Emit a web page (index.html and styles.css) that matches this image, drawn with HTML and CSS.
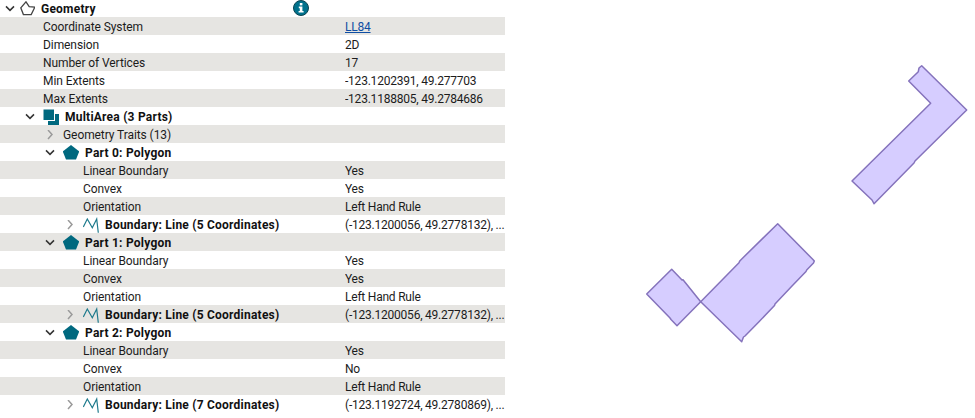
FILE: index.html
```html
<!DOCTYPE html>
<html lang="en">
<head>
  <meta charset="UTF-8">
  <title>Geometry</title>
  <link rel="stylesheet" href="styles.css">
</head>
<body>

  <!-- shared icons -->
  <svg class="defs" aria-hidden="true">
    <symbol id="open" viewBox="0 0 16 10"><path d="M4 2.4l4 4 4-4" fill="none" stroke="#333" stroke-width="1.5"/></symbol>
    <symbol id="closed" viewBox="0 0 16 10"><path d="M6 0l4 4.5-4 4.5" fill="none" stroke="#9a9a9a" stroke-width="1.5"/></symbol>
    <symbol id="poly" viewBox="0 0 16 16"><path d="M8 0l8.2 6.5-3.2 8H3L-.2 6.5z" fill="#00697f"/></symbol>
    <symbol id="line" viewBox="0 0 16 16"><path d="M.3 10L4.3 2 9.3 10.7 13.7 2 15.3 15.7" fill="none" stroke="#1d7a8c" stroke-width="1.2"/></symbol>
  </svg>

  <div class="page">
    <div class="tree">
      <div class="row first bold">
        <div class="name lvl0">
          <svg class="chev"><use href="#open"/></svg>
          <svg class="icon-geom" viewBox="0 0 15 15"><path d="M6 .8L9.2 5.6 14.8 6.2 11.2 13.6H3.4L.8 6.8z" fill="#fff" stroke="#444" stroke-width="1.3"/></svg>
          <span>Geometry</span>
        </div>
        <div class="value">
          <svg class="info" viewBox="0 0 16 16">
            <circle cx="8" cy="8" r="7.5" fill="#00718c" stroke="#0b4350"/>
            <rect x="6.8" y="3" width="2.6" height="2.4" fill="#fff"/>
            <path d="M5.8 6.6h3.6v4.4h1.2v1.6H5.6V11h1.2V8.2h-1z" fill="#fff"/>
          </svg>
        </div>
      </div>
      <div class="row alt"><div class="name prop1">Coordinate System</div><div class="value"><a href="#" class="link">LL84</a></div></div>
      <div class="row"><div class="name prop1">Dimension</div><div class="value">2D</div></div>
      <div class="row alt"><div class="name prop1">Number of Vertices</div><div class="value">17</div></div>
      <div class="row"><div class="name prop1">Min Extents</div><div class="value">-123.1202391, 49.277703</div></div>
      <div class="row alt"><div class="name prop1">Max Extents</div><div class="value">-123.1188805, 49.2784686</div></div>

      <div class="row bold">
        <div class="name lvl1">
          <svg class="chev"><use href="#open"/></svg>
          <svg class="icon" viewBox="0 0 16 16">
            <rect x="5" y="5" width="11" height="11" fill="#00697f"/>
            <rect x="0" y="0" width="11.5" height="11.5" fill="#00697f" stroke="#fff"/>
          </svg>
          <span>MultiArea (3 Parts)</span>
        </div>
      </div>
      <div class="row alt">
        <div class="name lvl2"><svg class="chev"><use href="#closed"/></svg><span>Geometry Traits (13)</span></div>
      </div>

      <!-- part 0 -->
      <div class="row bold">
        <div class="name lvl2"><svg class="chev"><use href="#open"/></svg><svg class="icon"><use href="#poly"/></svg><span>Part 0: Polygon</span></div>
      </div>
      <div class="row alt"><div class="name prop2">Linear Boundary</div><div class="value">Yes</div></div>
      <div class="row"><div class="name prop2">Convex</div><div class="value">Yes</div></div>
      <div class="row alt"><div class="name prop2">Orientation</div><div class="value">Left Hand Rule</div></div>
      <div class="row">
        <div class="name lvl3 bold"><svg class="chev"><use href="#closed"/></svg><svg class="icon"><use href="#line"/></svg><span>Boundary: Line (5 Coordinates)</span></div>
        <div class="value">(-123.1200056, 49.2778132), ...</div>
      </div>

      <!-- part 1 -->
      <div class="row alt bold">
        <div class="name lvl2"><svg class="chev"><use href="#open"/></svg><svg class="icon"><use href="#poly"/></svg><span>Part 1: Polygon</span></div>
      </div>
      <div class="row"><div class="name prop2">Linear Boundary</div><div class="value">Yes</div></div>
      <div class="row alt"><div class="name prop2">Convex</div><div class="value">Yes</div></div>
      <div class="row"><div class="name prop2">Orientation</div><div class="value">Left Hand Rule</div></div>
      <div class="row alt">
        <div class="name lvl3 bold"><svg class="chev"><use href="#closed"/></svg><svg class="icon"><use href="#line"/></svg><span>Boundary: Line (5 Coordinates)</span></div>
        <div class="value">(-123.1200056, 49.2778132), ...</div>
      </div>

      <!-- part 2 -->
      <div class="row bold">
        <div class="name lvl2"><svg class="chev"><use href="#open"/></svg><svg class="icon"><use href="#poly"/></svg><span>Part 2: Polygon</span></div>
      </div>
      <div class="row alt"><div class="name prop2">Linear Boundary</div><div class="value">Yes</div></div>
      <div class="row"><div class="name prop2">Convex</div><div class="value">No</div></div>
      <div class="row alt"><div class="name prop2">Orientation</div><div class="value">Left Hand Rule</div></div>
      <div class="row">
        <div class="name lvl3 bold"><svg class="chev"><use href="#closed"/></svg><svg class="icon"><use href="#line"/></svg><span>Boundary: Line (7 Coordinates)</span></div>
        <div class="value">(-123.1192724, 49.2780869), ...</div>
      </div>
    </div>

    <!-- geometry preview -->
    <svg class="map" viewBox="505 0 470 418">
      <path class="shape" d="M671.7 269.3L682 280 683 279.8 700.7 301.7 677 325.7 671 319.5 670 318 646.7 294z"/>
      <path class="shape" d="M700.7 301.7L739 262.7 740 260.7 777.7 223.7 812.7 259.3 814.3 261 813.5 263 806.7 270 806 271.5 792 286 775 304 774.5 305.5 759 321.7 745 336 743.5 337 741.7 341.7z"/>
      <path class="shape" d="M921.7 65.7L966.7 110 915 161 914 163 874 203.7 872 200 852 181 930.7 103.3 908.7 81 918.3 71.7 919 68z"/>
    </svg>
  </div>
</body>
</html>
```

FILE: styles.css
```css
body {
  margin: 0;
  background: #fff;
  font-family: Roboto, Arial, sans-serif;
  font-size: 12px;
  color: #1c1c1c;
  overflow: hidden;
}

.defs {
  position: absolute;
  width: 0;
  height: 0;
}

.page {
  display: flex;
  height: 418px;
}

.tree {
  width: 505px;
  flex-shrink: 0;
}

.map {
  width: 470px;
  height: 418px;
}

.shape {
  fill: #d6cdff;
  stroke: #8573bc;
  stroke-width: 1.5;
  stroke-linejoin: round;
}

/* rows */
.row {
  display: flex;
  height: 18px;
  line-height: 20px;
  white-space: nowrap;
}

.row.first {
  height: 17px;
}

.row.alt {
  background: #e6e5e2;
}

.bold .name,
.name.bold {
  font-weight: 700;
  color: #111;
  letter-spacing: 0.23px;
}

.name {
  box-sizing: border-box;
  width: 345px;
  height: 18px;
  padding-top: 2px;
  flex-shrink: 0;
  display: flex;
  align-items: center;
  letter-spacing: -0.08px;
}

.first .name {
  margin-top: -1px;
}

.value {
  flex: 1;
  overflow: hidden;
  font-weight: 400;
  letter-spacing: -0.22px;
}

.link {
  color: #0f4ea3;
}

/* tree indents */
.lvl0 { padding-left: 2px; }
.lvl1 { padding-left: 22px; }
.lvl2 { padding-left: 42px; }
.lvl3 { padding-left: 62px; }
.prop1 { padding-left: 43px; }
.prop2 { padding-left: 83px; }

.chev {
  width: 16px;
  height: 10px;
  margin-right: 5px;
  flex-shrink: 0;
}

.lvl0 .chev {
  margin-right: 2px;
}

.icon {
  width: 16px;
  height: 16px;
  margin-right: 6px;
  flex-shrink: 0;
}

.icon-geom {
  width: 15px;
  height: 15px;
  margin-top: -2px;
  margin-right: 6px;
  flex-shrink: 0;
}

.info {
  display: block;
  width: 16px;
  height: 16px;
  margin-left: -52px;
  overflow: visible;
}

.first .value {
  overflow: visible;
}
```
